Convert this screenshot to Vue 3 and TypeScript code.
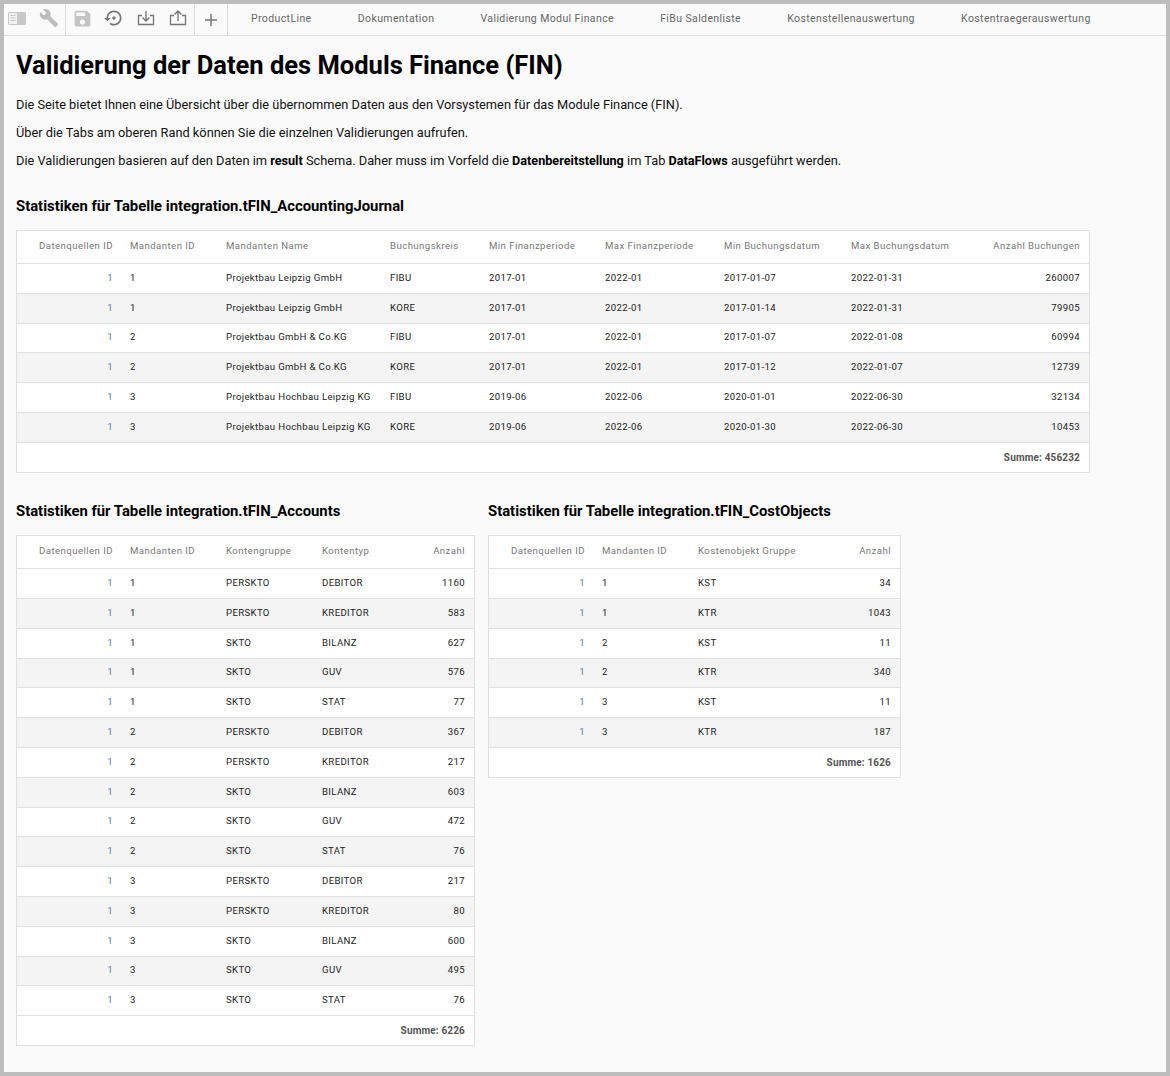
<script setup lang="ts">
interface Col { label: string; width: number; right?: boolean }
interface Tbl { title: string; cols: Col[]; rows: (string | number)[][]; sum: number; width: number }

const tabs = ['ProductLine', 'Dokumentation', 'Validierung Modul Finance', 'FiBu Saldenliste', 'Kostenstellenauswertung', 'Kostentraegerauswertung']

const journal: Tbl = {
  title: 'Statistiken für Tabelle integration.tFIN_AccountingJournal',
  width: 1074,
  sum: 456232,
  cols: [
    { label: 'Datenquellen ID', width: 105, right: true },
    { label: 'Mandanten ID', width: 96 },
    { label: 'Mandanten Name', width: 164 },
    { label: 'Buchungskreis', width: 99 },
    { label: 'Min Finanzperiode', width: 116 },
    { label: 'Max Finanzperiode', width: 119 },
    { label: 'Min Buchungsdatum', width: 127 },
    { label: 'Max Buchungsdatum', width: 120 },
    { label: 'Anzahl Buchungen', width: 126, right: true }
  ],
  rows: [
    [1, 1, 'Projektbau Leipzig GmbH', 'FIBU', '2017-01', '2022-01', '2017-01-07', '2022-01-31', 260007],
    [1, 1, 'Projektbau Leipzig GmbH', 'KORE', '2017-01', '2022-01', '2017-01-14', '2022-01-31', 79905],
    [1, 2, 'Projektbau GmbH & Co.KG', 'FIBU', '2017-01', '2022-01', '2017-01-07', '2022-01-08', 60994],
    [1, 2, 'Projektbau GmbH & Co.KG', 'KORE', '2017-01', '2022-01', '2017-01-12', '2022-01-07', 12739],
    [1, 3, 'Projektbau Hochbau Leipzig KG', 'FIBU', '2019-06', '2022-06', '2020-01-01', '2022-06-30', 32134],
    [1, 3, 'Projektbau Hochbau Leipzig KG', 'KORE', '2019-06', '2022-06', '2020-01-30', '2022-06-30', 10453]
  ]
}

const accounts: Tbl = {
  title: 'Statistiken für Tabelle integration.tFIN_Accounts',
  width: 459,
  sum: 6226,
  cols: [
    { label: 'Datenquellen ID', width: 105, right: true },
    { label: 'Mandanten ID', width: 96 },
    { label: 'Kontengruppe', width: 96 },
    { label: 'Kontentyp', width: 80 },
    { label: 'Anzahl', width: 80, right: true }
  ],
  rows: [
    [1, 1, 'PERSKTO', 'DEBITOR', 1160],
    [1, 1, 'PERSKTO', 'KREDITOR', 583],
    [1, 1, 'SKTO', 'BILANZ', 627],
    [1, 1, 'SKTO', 'GUV', 576],
    [1, 1, 'SKTO', 'STAT', 77],
    [1, 2, 'PERSKTO', 'DEBITOR', 367],
    [1, 2, 'PERSKTO', 'KREDITOR', 217],
    [1, 2, 'SKTO', 'BILANZ', 603],
    [1, 2, 'SKTO', 'GUV', 472],
    [1, 2, 'SKTO', 'STAT', 76],
    [1, 3, 'PERSKTO', 'DEBITOR', 217],
    [1, 3, 'PERSKTO', 'KREDITOR', 80],
    [1, 3, 'SKTO', 'BILANZ', 600],
    [1, 3, 'SKTO', 'GUV', 495],
    [1, 3, 'SKTO', 'STAT', 76]
  ]
}

const costObjects: Tbl = {
  title: 'Statistiken für Tabelle integration.tFIN_CostObjects',
  width: 413,
  sum: 1626,
  cols: [
    { label: 'Datenquellen ID', width: 105, right: true },
    { label: 'Mandanten ID', width: 96 },
    { label: 'Kostenobjekt Gruppe', width: 130 },
    { label: 'Anzahl', width: 80, right: true }
  ],
  rows: [
    [1, 1, 'KST', 34],
    [1, 1, 'KTR', 1043],
    [1, 2, 'KST', 11],
    [1, 2, 'KTR', 340],
    [1, 3, 'KST', 11],
    [1, 3, 'KTR', 187]
  ]
}

const lowerTables = [accounts, costObjects]
const grid = (t: Tbl) => t.cols.map(c => c.width + 'px').join(' ')
</script>

<template>
  <div class="frame">
    <header class="toolbar">
      <div class="group g1">
        <button class="ib panel">
          <svg width="18" height="13" viewBox="0 0 18 13"><rect width="18" height="13" rx="1.500" fill="#c8c8c8"/><rect x="1" y="1" width="8" height="11" fill="#f2f2f2"/><path stroke="#c8c8c8" d="M2.500 3.500h5M2.500 6h5M2.500 8.500h5"/></svg>
        </button>
        <button class="ib wrench">
          <svg width="20" height="20" viewBox="0 0 24 24"><path fill="#bdbdbd" d="M22.700 19l-9.100-9.100c.9-2.300.4-5-1.500-6.900-2-2-5-2.400-7.400-1.300L9 6 6 9 1.600 4.700C.4 7.100.9 10.100 2.900 12.100c1.900 1.900 4.600 2.400 6.900 1.500l9.100 9.100c.4.400 1 .4 1.400 0l2.300-2.300c.5-.4.5-1.100.1-1.400z"/></svg>
        </button>
      </div>
      <div class="group g2">
        <button class="ib">
          <svg width="21" height="21" viewBox="0 0 24 24"><path fill="#c4c4c4" d="M17 3H5c-1.110 0-2 .9-2 2v14c0 1.100.89 2 2 2h14c1.100 0 2-.9 2-2V7l-4-4zm-5 16c-1.660 0-3-1.340-3-3s1.340-3 3-3 3 1.340 3 3-1.340 3-3 3zm3-10H5V5h10v4z"/></svg>
        </button>
        <button class="ib">
          <svg width="20" height="20" viewBox="0 0 24 24"><path fill="#757575" d="M14 12c0-1.100-.9-2-2-2s-2 .9-2 2 .9 2 2 2 2-.9 2-2zm-2-9c-4.970 0-9 4.030-9 9H0l4 4 4-4H5c0-3.870 3.130-7 7-7s7 3.130 7 7-3.130 7-7 7c-1.510 0-2.910-.49-4.060-1.300l-1.420 1.440C8.040 20.300 9.940 21 12 21c4.970 0 9-4.030 9-9s-4.030-9-9-9z"/></svg>
        </button>
        <button class="ib">
          <svg width="18" height="18" viewBox="0 0 18 18" fill="none" stroke="#757575" stroke-width="1.300"><path d="M9 2v10M5.500 8.500 9 12l3.500-3.500M5 6.500H1.500v9h15v-9H13"/></svg>
        </button>
        <button class="ib">
          <svg width="18" height="18" viewBox="0 0 18 18" fill="none" stroke="#757575" stroke-width="1.300"><path d="M9 12V2M5.500 5.500 9 2l3.500 3.500M5 6.500H1.500v9h15v-9H13"/></svg>
        </button>
      </div>
      <div class="group g3">
        <button class="ib plus">
          <svg width="12" height="12" viewBox="0 0 12 12"><path stroke="#757575" stroke-width="1.500" d="M6 0v12M0 6h12"/></svg>
        </button>
      </div>
      <nav class="tabs">
        <span v-for="tab in tabs" :key="tab" class="tab">{{ tab }}</span>
      </nav>
    </header>

    <main class="content">
      <h1>Validierung der Daten des Moduls Finance (FIN)</h1>
      <p>Die Seite bietet Ihnen eine Übersicht über die übernommen Daten aus den Vorsystemen für das Module Finance (FIN).</p>
      <p>Über die Tabs am oberen Rand können Sie die einzelnen Validierungen aufrufen.</p>
      <p>Die Validierungen basieren auf den Daten im <b>result</b> Schema. Daher muss im Vorfeld die <b>Datenbereitstellung</b> im Tab <b>DataFlows</b> ausgeführt werden.</p>

      <section class="block first">
        <h2>{{ journal.title }}</h2>
        <div class="tbl" :style="{ width: journal.width + 'px' }">
          <div class="row head" :style="{ gridTemplateColumns: grid(journal) }">
            <div v-for="c in journal.cols" :key="c.label" class="cell" :class="{ right: c.right }">{{ c.label }}</div>
          </div>
          <div v-for="(r, i) in journal.rows" :key="i" class="row" :class="{ odd: i % 2 === 1 }" :style="{ gridTemplateColumns: grid(journal) }">
            <div v-for="(v, j) in r" :key="j" class="cell" :class="{ right: journal.cols[j].right, id: j === 0 }">{{ v }}</div>
          </div>
          <div class="sum">Summe: {{ journal.sum }}</div>
        </div>
      </section>

      <div class="lower">
        <section v-for="t in lowerTables" :key="t.title" class="block">
          <h2>{{ t.title }}</h2>
          <div class="tbl" :style="{ width: t.width + 'px' }">
            <div class="row head" :style="{ gridTemplateColumns: grid(t) }">
              <div v-for="c in t.cols" :key="c.label" class="cell" :class="{ right: c.right }">{{ c.label }}</div>
            </div>
            <div v-for="(r, i) in t.rows" :key="i" class="row" :class="{ odd: i % 2 === 1 }" :style="{ gridTemplateColumns: grid(t) }">
              <div v-for="(v, j) in r" :key="j" class="cell" :class="{ right: t.cols[j].right, id: j === 0 }">{{ v }}</div>
            </div>
            <div class="sum">Summe: {{ t.sum }}</div>
          </div>
        </section>
      </div>
    </main>
  </div>
</template>

<style>
html, body { margin: 0; background: #bdbdbd; }
</style>

<style scoped>
.frame {
  box-sizing: border-box;
  width: 1170px;
  height: 1076px;
  border: 4px solid #bdbdbd;
  background: #fafafa;
  font-family: Roboto, sans-serif;
  color: #111;
  overflow: hidden;
}
.toolbar {
  display: flex;
  height: 32px;
  box-sizing: border-box;
  border-bottom: 1px solid #ddd;
  background: #fafafa;
}
.group { display: flex; align-items: center; border-right: 1px solid #ddd; }
.g1 { width: 61px; }
.g2 { width: 128px; }
.g3 { width: 32px; justify-content: center; }
.ib {
  border: 0;
  background: none;
  padding: 0 0 3px;
  width: 32px;
  height: 31px;
  flex: none;
  display: flex;
  align-items: center;
  justify-content: center;
}
.ib.panel { width: 26px; }
.ib.wrench { width: 35px; padding-left: 3px; }
.ib.plus { padding-bottom: 0; }
.tabs { display: flex; align-items: center; padding: 0 0 2px 23px; gap: 46.200px; }
.tab { font-size: 10.500px; letter-spacing: 0.39px; color: #666; white-space: nowrap; }
.content { padding: 0 12px; }
h1 { margin: 13px 0 0; font-size: 25.500px; line-height: 32px; font-weight: 700; color: #000; }
p { margin: 0; font-size: 12.800px; line-height: 28px; color: #111; }
h1 + p { margin-top: 10px; }
b { font-size: 12.650px; font-weight: 700; color: #000; }
h2 { margin: 0 0 14px; font-size: 14.850px; line-height: 20px; font-weight: 700; color: #000; }
.block.first { margin-top: 21px; }
.lower { display: flex; gap: 13px; margin-top: 28.400px; align-items: flex-start; }
.tbl { box-sizing: border-box; border: 1px solid #e0e0e0; background: #fff; }
.row { display: grid; height: 29.800px; box-sizing: border-box; border-bottom: 1px solid #e0e0e0; align-items: center; padding-bottom: 2px; }
.row.head { height: 33px; padding-bottom: 3px; }
.row.odd { background: #f4f4f4; }
.cell {
  padding: 0 9px 0 8px;
  font-size: 9.600px;
  letter-spacing: 0.35px;
  color: #222;
  white-space: nowrap;
}
.head .cell { color: #777; letter-spacing: 0.45px; }
.cell.id { color: #5a7f9f; }
.cell.right { text-align: right; }
.sum {
  height: 29px;
  line-height: 29px;
  padding-right: 9px;
  text-align: right;
  font-size: 10px;
  letter-spacing: 0.15px;
  font-weight: 700;
  color: #555;
}
</style>
